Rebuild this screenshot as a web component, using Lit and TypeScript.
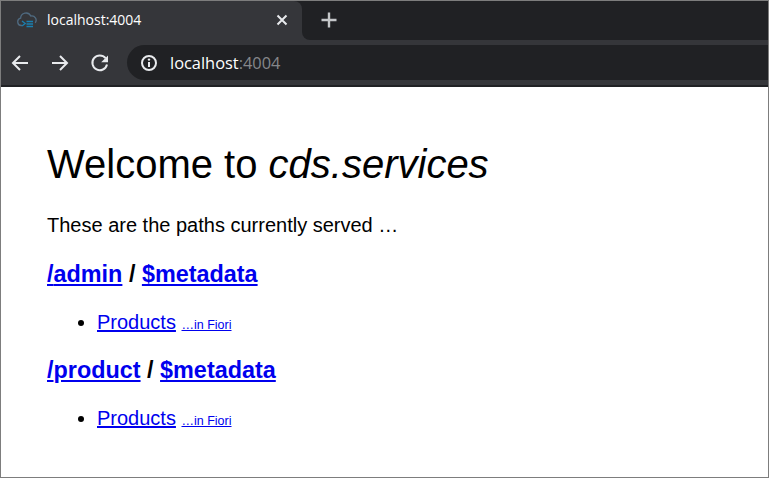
import { LitElement, html, css } from "lit";
import { customElement } from "lit/decorators.js";

@customElement("app-root")
export class AppRoot extends LitElement {
  static styles = css`
    :host {
      display: block;
      width: 769px;
      height: 478px;
      box-sizing: border-box;
      border: 1px solid #7d7d7d;
      background: #fff;
      overflow: hidden;
      font-family: "Liberation Sans", Arial, sans-serif;
    }
    .tabstrip {
      display: flex;
      height: 39px;
      background: linear-gradient(#202124 50%, #35363a 50%);
    }
    .tab {
      display: flex;
      align-items: center;
      width: 301px;
      box-sizing: border-box;
      padding: 0 12px 2px 16px;
      background: #35363a;
      border-top-right-radius: 8px;
      color: #fff;
      font-family: "Open Sans", sans-serif;
      font-size: 14px;
    }
    .tab .title {
      flex: 1;
      margin-left: 10px;
    }
    .rest {
      flex: 1;
      display: flex;
      align-items: center;
      padding: 0 0 2px 18px;
      background: #202124;
      border-bottom-left-radius: 8px;
    }
    .toolbar {
      display: flex;
      align-items: center;
      padding: 5px 0;
      background: #35363a;
      border-bottom: 2px solid #202124;
    }
    .nav {
      display: flex;
      align-items: center;
      gap: 20px;
      padding-left: 9px;
      width: 126px;
      box-sizing: border-box;
    }
    .nav svg {
      display: block;
    }
    .omnibox {
      flex: 1;
      display: flex;
      align-items: center;
      height: 35px;
      padding-left: 13px;
      background: #202124;
      border-radius: 18px 0 0 18px;
      font-family: "Open Sans", sans-serif;
      font-size: 16.4px;
      color: #fff;
    }
    .omnibox .host {
      margin-left: 12px;
    }
    .omnibox .port {
      color: #85878a;
    }
    main {
      padding: 1px 46px;
      color: #000;
    }
    h1 {
      margin: 53px 0 0;
      font-size: 40px;
      line-height: 46px;
      font-weight: 400;
    }
    p {
      margin: 27px 0 24px;
      font-size: 20px;
      line-height: 23px;
    }
    h2 {
      margin: 20px 0 0;
      font-size: 23.4px;
      line-height: 27px;
      font-weight: 700;
    }
    ul {
      margin: 23px 0 0;
      padding: 0 0 0 50px;
      font-size: 20px;
      line-height: 23px;
    }
    a {
      color: #0000ee;
    }
    small {
      font-size: 12.5px;
    }
  `;

  service(path: string) {
    return html`
      <h2><a href="#">/${path}</a> / <a href="#">$metadata</a></h2>
      <ul>
        <li><a href="#">Products</a> <small><a href="#">…in Fiori</a></small></li>
      </ul>
    `;
  }

  render() {
    return html`
      <div class="tabstrip">
        <div class="tab">
          <svg width="20" height="20" viewBox="0 0 20 20" fill="none">
            <path d="M5 15.5H4.2a3.7 3.7 0 0 1-.6-7.3A5.4 5.4 0 0 1 13.8 6a4.3 4.3 0 0 1 4.4 6.8" stroke="#4f6a80" stroke-width="1.3" />
            <path d="M5 11l3.2 2.5L5 16" stroke="#1a7fb0" stroke-width="1.3" />
            <path d="M9.5 11.5H16M9.5 14H16M9.5 16.5H16" stroke="#1a7fb0" stroke-width="1.4" />
          </svg>
          <span class="title">localhost:4004</span>
          <svg width="16" height="16" viewBox="0 0 16 16">
            <path d="M3.5 3.5l9 9M12.5 3.5l-9 9" stroke="#e8eaed" stroke-width="2" />
          </svg>
        </div>
        <div class="rest">
          <svg width="18" height="18" viewBox="0 0 18 18">
            <path d="M9 1.5v15M1.5 9h15" stroke="#c4c7c9" stroke-width="2.4" />
          </svg>
        </div>
      </div>
      <div class="toolbar">
        <div class="nav">
          <svg width="20" height="20" viewBox="0 0 20 20" fill="none">
            <path d="M18 10H3M10 3l-7 7 7 7" stroke="#e8eaed" stroke-width="2" />
          </svg>
          <svg width="20" height="20" viewBox="0 0 20 20" fill="none">
            <path d="M2 10h15M10 3l7 7-7 7" stroke="#e8eaed" stroke-width="2" />
          </svg>
          <svg width="20" height="20" viewBox="0 0 20 20" fill="none">
            <path d="M15.6 5.2A7.4 7.4 0 1 0 17 11.5" stroke="#e8eaed" stroke-width="2" />
            <path d="M18 2.5v6.8h-6.8z" fill="#e8eaed" />
          </svg>
        </div>
        <div class="omnibox">
          <svg width="18" height="18" viewBox="0 0 18 18" fill="none">
            <circle cx="9" cy="9" r="7" stroke="#e8eaed" stroke-width="2" />
            <path d="M9 8v5" stroke="#e8eaed" stroke-width="2" />
            <circle cx="9" cy="5.6" r="1.2" fill="#e8eaed" />
          </svg>
          <span class="host">localhost<span class="port">:4004</span></span>
        </div>
      </div>
      <main>
        <h1>Welcome to <i>cds.services</i></h1>
        <p>These are the paths currently served …</p>
        ${this.service("admin")}
        ${this.service("product")}
      </main>
    `;
  }
}
